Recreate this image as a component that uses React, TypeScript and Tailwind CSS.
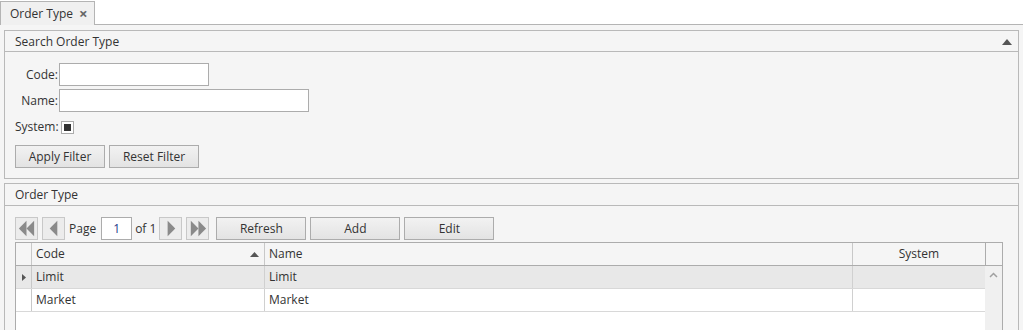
import React from 'react';

const font = { fontFamily: '"Open Sans", "Noto Sans", sans-serif' };

function NavBtn({ dir }: { dir: 'first' | 'prev' | 'next' | 'last' }) {
  const shapes: Record<string, string[]> = {
    first: ['M11 3 L3 11 L11 19 Z', 'M19 3 L11 11 L19 19 Z'],
    prev: ['M15 3 L7 11 L15 19 Z'],
    next: ['M8 3 L16 11 L8 19 Z'],
    last: ['M4 3 L12 11 L4 19 Z', 'M12 3 L20 11 L12 19 Z'],
  };
  return (
    <div className="w-[23px] h-[23px] border border-[#c8c8c8] bg-[#ececec] flex items-center justify-center">
      <svg width="21" height="21" viewBox="0 0 22 22">
        {shapes[dir].map((d, i) => (
          <path key={i} d={d} fill="#8a8a8a" />
        ))}
      </svg>
    </div>
  );
}

function Button({ label, w }: { label: string; w: string }) {
  return (
    <div
      className={`${w} h-[23px] border border-[#acacac] bg-gradient-to-b from-[#f2f2f2] to-[#e3e3e3] flex items-center justify-center text-[12px] text-[#333]`}
    >
      {label}
    </div>
  );
}

export default function App() {
  return (
    <div className="w-[1023px] h-[330px] overflow-hidden bg-[#f5f5f5] text-[12px] text-[#333]" style={font}>
      {/* Tab strip */}
      <div className="h-[25px] bg-white border-b border-[#b4b4b4] flex items-end">
        <div className="h-[24px] w-[95px] -mb-px bg-[#f0f0f0] border border-b-0 border-[#b4b4b4] flex items-center pl-[9px] gap-[6px]">
          <span>Order Type</span>
          <span className="text-[15px] font-bold text-[#666] leading-none">×</span>
        </div>
      </div>

      {/* Search panel */}
      <div className="ml-[4px] mr-[4px] mt-[5px] h-[149px] border border-[#b9b9b9] bg-[#f5f5f5]">
        <div className="h-[21px] border-b border-[#b9b9b9] flex items-center justify-between pl-[10px] pr-[6px] pt-[2px]">
          <span>Search Order Type</span>
          <svg width="10" height="6" viewBox="0 0 10 6">
            <path d="M5 0 L10 6 L0 6 Z" fill="#555" />
          </svg>
        </div>
        <div className="pt-[11px] pl-[10px] flex flex-col">
          <div className="flex items-center h-[23px]">
            <span className="w-[44px] text-right pr-[1px]">Code:</span>
            <div className="w-[150px] h-[23px] bg-white border border-[#acacac]" />
          </div>
          <div className="flex items-center h-[23px] mt-[3px]">
            <span className="w-[44px] text-right pr-[1px]">Name:</span>
            <div className="w-[250px] h-[23px] bg-white border border-[#acacac]" />
          </div>
          <div className="flex items-center h-[20px] mt-[5px]">
            <span className="w-[43px] text-right">System:</span>
            <div className="ml-[3px] w-[13px] h-[13px] border border-[#acacac] bg-white flex items-center justify-center">
              <div className="w-[7px] h-[7px] bg-[#333]" />
            </div>
          </div>
          <div className="flex gap-[4px] mt-[8px]">
            <Button label="Apply Filter" w="w-[90px]" />
            <Button label="Reset Filter" w="w-[90px]" />
          </div>
        </div>
      </div>

      {/* Order Type panel */}
      <div className="ml-[4px] mr-[4px] mt-[4px] h-[200px] border border-[#b9b9b9] bg-[#f5f5f5]">
        <div className="h-[22px] border-b border-[#b9b9b9] flex items-center pl-[10px] pt-[1px]">
          <span>Order Type</span>
        </div>
        <div className="pt-[11px] pl-[10px] pr-[15px]">
          <div className="flex items-center h-[23px]">
            <NavBtn dir="first" />
            <div className="ml-[4px]"><NavBtn dir="prev" /></div>
            <span className="ml-[4px]">Page</span>
            <div className="ml-[5px] w-[31px] h-[23px] bg-white border border-[#acacac] flex items-center justify-center text-[#1e3a8a]">1</div>
            <span className="ml-[3px]">of 1</span>
            <div className="ml-[3px]"><NavBtn dir="next" /></div>
            <div className="ml-[4px]"><NavBtn dir="last" /></div>
            <div className="ml-[7px] flex gap-[4px]">
              <Button label="Refresh" w="w-[90px]" />
              <Button label="Add" w="w-[90px]" />
              <Button label="Edit" w="w-[90px]" />
            </div>
          </div>

          {/* Grid */}
          <div className="mt-[2px] h-[120px] border border-[#acacac] bg-white flex">
            <div className="flex-1 flex flex-col">
              <div className="h-[23px] flex bg-[#f5f5f5] border-b border-[#acacac]">
                <div className="w-[16px] border-r border-[#c8c8c8]" />
                <div className="w-[233px] border-r border-[#c8c8c8] flex items-center justify-between pl-[4px] pr-[5px]">
                  <span>Code</span>
                  <svg width="9" height="5" viewBox="0 0 9 5">
                    <path d="M4.5 0 L9 5 L0 5 Z" fill="#555" />
                  </svg>
                </div>
                <div className="w-[588px] border-r border-[#c8c8c8] flex items-center pl-[4px]">Name</div>
                <div className="flex-1 flex items-center justify-center">System</div>
              </div>
              <div className="h-[23px] flex bg-[#e8e8e8] border-b border-[#d8d8d8]">
                <div className="w-[16px] border-r border-[#c8c8c8] flex items-center justify-center">
                  <svg width="4" height="7" viewBox="0 0 4 7">
                    <path d="M0 0 L4 3.5 L0 7 Z" fill="#555" />
                  </svg>
                </div>
                <div className="w-[233px] border-r border-[#d0d0d0] flex items-center pl-[4px]">Limit</div>
                <div className="w-[588px] border-r border-[#d0d0d0] flex items-center pl-[4px]">Limit</div>
                <div className="flex-1" />
              </div>
              <div className="h-[23px] flex bg-white border-b border-[#d8d8d8]">
                <div className="w-[16px] border-r border-[#c8c8c8]" />
                <div className="w-[233px] border-r border-[#d0d0d0] flex items-center pl-[4px]">Market</div>
                <div className="w-[588px] border-r border-[#d0d0d0] flex items-center pl-[4px]">Market</div>
                <div className="flex-1" />
              </div>
            </div>
            <div className="w-[17px] flex flex-col">
              <div className="h-[23px] bg-[#f5f5f5] border-l border-b border-[#acacac]" />
              <div className="flex-1 bg-[#f0f0f0] flex justify-center pt-[6px]">
                <svg width="9" height="6" viewBox="0 0 9 6">
                  <path d="M1 5 L4.5 1.5 L8 5" stroke="#a0a0a0" strokeWidth="1.5" fill="none" />
                </svg>
              </div>
            </div>
          </div>
        </div>
      </div>
    </div>
  );
}
